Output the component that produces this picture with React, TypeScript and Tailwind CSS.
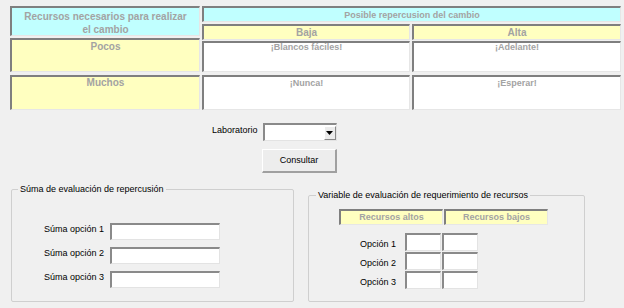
import React from "react";

// celda con borde hundido (estilo formulario Access)
const sunken =
  "border-t-2 border-l-2 border-t-[#7f7f7f] border-l-[#7f7f7f] border-b border-r border-b-[#e6e6e6] border-r-[#e6e6e6]";

function Cell({ className, children }: { className: string; children?: React.ReactNode }) {
  return (
    <div className={`${sunken} ${className} text-center font-bold text-[#a3a3a3]`}>{children}</div>
  );
}

function TextBox({ className }: { className: string }) {
  return (
    <div
      className={`bg-white border-t-2 border-l-2 border-t-[#8a8a8a] border-l-[#8a8a8a] border-b border-r border-b-[#e3e3e3] border-r-[#e3e3e3] ${className}`}
    />
  );
}

export default function App() {
  const sumas = ["Súma opción 1", "Súma opción 2", "Súma opción 3"];
  const opciones = ["Opción 1", "Opción 2", "Opción 3"];

  return (
    <div
      className="w-[624px] h-[308px] overflow-hidden bg-[#f0f0f0] text-black"
      style={{ fontFamily: '"Liberation Sans", Arial, sans-serif' }}
    >
      {/* Tabla de repercusion */}
      <div className="flex gap-[2px] pl-[10px] pt-[6px]">
        <div className="flex w-[190px] flex-col">
          <Cell className="h-[30px] bg-[#c0ffff] pt-[2px] text-[10px] leading-[13px]">
            Recursos necesarios para realizar
            <br />
            el cambio
          </Cell>
          <Cell className="mt-[2px] h-[34px] bg-[#ffffc0] pt-[1px] text-[10px] leading-[12px]">Pocos</Cell>
          <Cell className="mt-[3px] h-[35px] bg-[#ffffc0] text-[10px] leading-[12px]">Muchos</Cell>
        </div>

        <div className="flex w-[419px] flex-col">
          <Cell className="flex h-[16px] items-center justify-center bg-[#c0ffff] text-[9px] leading-[12px]">
            Posible repercusion del cambio
          </Cell>
          <div className="mt-[2px] flex gap-[2px]">
            <Cell className="flex h-[16px] w-[208px] items-center justify-center bg-[#ffffc0] text-[10px] leading-[12px]">
              Baja
            </Cell>
            <Cell className="flex h-[16px] w-[209px] items-center justify-center bg-[#ffffc0] text-[10px] leading-[12px]">
              Alta
            </Cell>
          </div>
          <div className="mt-[1px] flex gap-[2px]">
            <Cell className="h-[31px] w-[208px] bg-white text-[9px] leading-[8px]">¡Blancos fáciles!</Cell>
            <Cell className="h-[31px] w-[209px] bg-white text-[9px] leading-[8px]">¡Adelante!</Cell>
          </div>
          <div className="mt-[3px] flex gap-[2px]">
            <Cell className="h-[35px] w-[208px] bg-white text-[9px] leading-[12px]">¡Nunca!</Cell>
            <Cell className="h-[35px] w-[209px] bg-white text-[9px] leading-[12px]">¡Esperar!</Cell>
          </div>
        </div>
      </div>

      {/* Laboratorio */}
      <div className="ml-[212px] mt-[13px] flex items-start gap-[5px]">
        <span className="pt-[2px] text-[9px] leading-[11px]">Laboratorio</span>
        <div className="flex h-[18px] w-[74px] items-center justify-end bg-white border-t-2 border-l-2 border-t-[#8a8a8a] border-l-[#8a8a8a] border-b border-r border-b-[#e3e3e3] border-r-[#e3e3e3]">
          <div className="flex h-[14px] w-[12px] items-center justify-center bg-[#ececec] border-t border-l border-t-white border-l-white border-b border-r border-b-[#8a8a8a] border-r-[#8a8a8a]">
            <svg width="7" height="4" viewBox="0 0 7 4">
              <path d="M0 0 H7 L3.5 4 Z" fill="#000" />
            </svg>
          </div>
        </div>
      </div>

      <div className="ml-[262px] mt-[8px] flex h-[24px] w-[75px] items-center justify-center bg-[#ededed] border-t border-l border-t-white border-l-white border-b-2 border-r-2 border-b-[#a0a0a0] border-r-[#a0a0a0] text-[9px]">
        Consultar
      </div>

      {/* Grupos inferiores */}
      <div className="mt-[11px] flex items-start gap-[14px] pl-[11px]">
        <fieldset className="h-[118px] w-[283px] rounded-[2px] border border-[#cfcfcf]">
          <legend className="ml-[6px] px-[2px] text-[9px] leading-[11px]">Súma de evaluación de repercusión</legend>
          <div className="flex flex-col gap-[7px] pt-[28px]">
            {sumas.map((s) => (
              <div key={s} className="flex items-center gap-[6px]">
                <span className="w-[92px] pb-[5px] text-right text-[9px] leading-[11px]">{s}</span>
                <TextBox className="h-[17px] w-[110px]" />
              </div>
            ))}
          </div>
        </fieldset>

        <fieldset className="mt-[6px] h-[112px] w-[277px] rounded-[2px] border border-[#cfcfcf]">
          <legend className="ml-[7px] px-[2px] text-[9px] leading-[11px]">
            Variable de evaluación de requerimiento de recursos
          </legend>
          <div className="ml-[30px] mt-[8px] flex gap-[1px]">
            <Cell className="flex h-[16px] w-[104px] items-center justify-center bg-[#ffffc0] text-[9px] leading-[11px]">
              Recursos altos
            </Cell>
            <Cell className="flex h-[16px] w-[104px] items-center justify-center bg-[#ffffc0] text-[9px] leading-[11px]">
              Recursos bajos
            </Cell>
          </div>
          <div className="mt-[8px] flex flex-col gap-[1px]">
            {opciones.map((o) => (
              <div key={o} className="flex items-center">
                <span className="mr-[9px] w-[87px] pt-[4px] text-right text-[9px] leading-[11px]">{o}</span>
                <TextBox className="h-[18px] w-[36px]" />
                <TextBox className="ml-[1px] h-[18px] w-[36px]" />
              </div>
            ))}
          </div>
        </fieldset>
      </div>
    </div>
  );
}
